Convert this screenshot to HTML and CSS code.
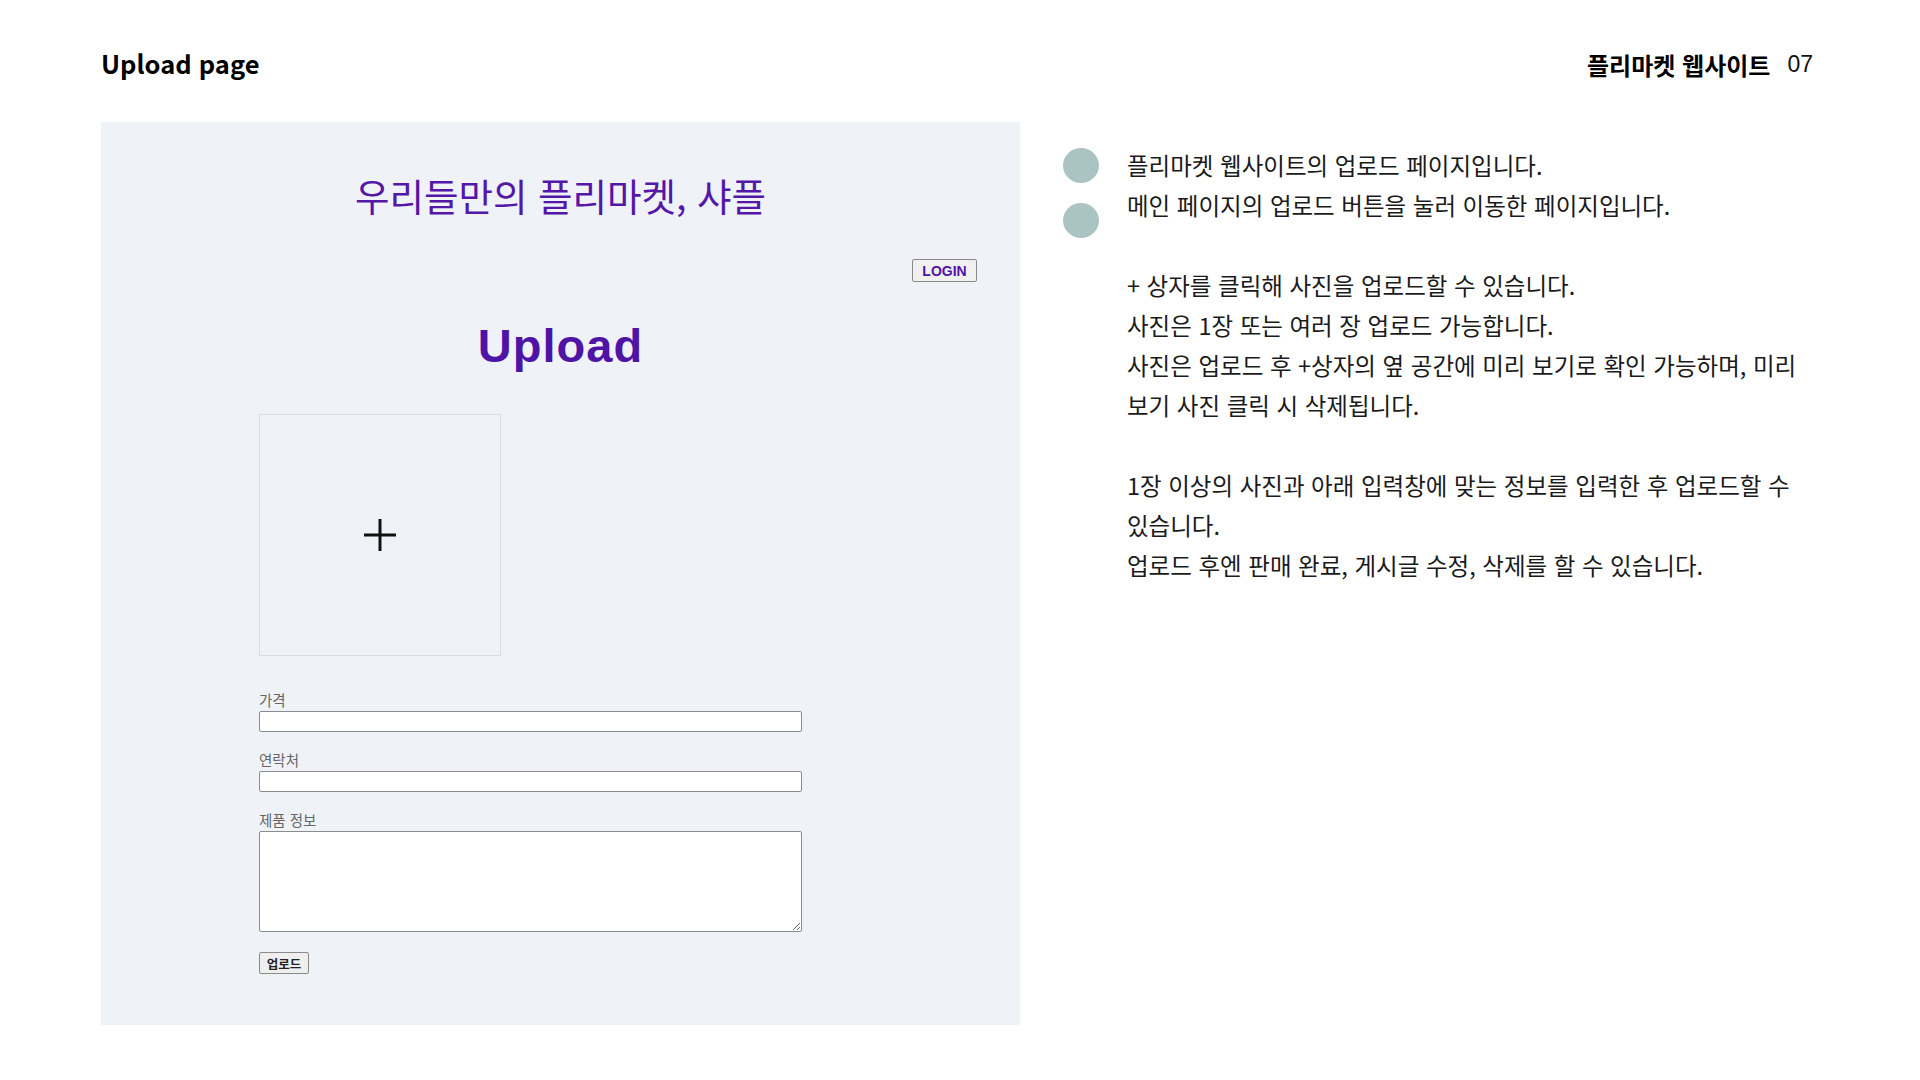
FILE: index.html
```html
<!DOCTYPE html>
<html lang="ko">
<head>
<meta charset="utf-8">
<title>Upload page</title>
<link rel="stylesheet" href="styles.css">
</head>
<body>
<div class="slide">
  <header class="slide-header">
    <h1 class="slide-title">Upload page</h1>
    <div class="slide-meta"><span class="meta-name">플리마켓 웹사이트</span><span class="meta-num">07</span></div>
  </header>
  <main class="slide-body">
    <section class="shot">
      <h2 class="site-title">우리들만의 플리마켓, 샤플</h2>
      <div class="login-row"><button class="login-btn" type="button">LOGIN</button></div>
      <h3 class="upload-title">Upload</h3>
      <form class="upload-form">
        <div class="photo-box">
          <svg width="34" height="34" viewBox="0 0 34 34"><path d="M17 1V33M1 17H33" stroke="#111" stroke-width="3" fill="none"/></svg>
        </div>
        <label class="field-label" for="price">가격</label>
        <input class="field-input" id="price" type="text">
        <label class="field-label" for="contact">연락처</label>
        <input class="field-input" id="contact" type="text">
        <label class="field-label" for="info">제품 정보</label>
        <textarea class="field-area" id="info"></textarea>
        <button class="submit-btn" type="button">업로드</button>
      </form>
    </section>
    <section class="notes">
      <div class="dots">
        <span class="dot"></span>
        <span class="dot"></span>
      </div>
      <div class="note-text">
        <p>플리마켓 웹사이트의 업로드 페이지입니다.<br>메인 페이지의 업로드 버튼을 눌러 이동한 페이지입니다.</p>
        <p>+ 상자를 클릭해 사진을 업로드할 수 있습니다.<br>사진은 1장 또는 여러 장 업로드 가능합니다.<br>사진은 업로드 후 +상자의 옆 공간에 미리 보기로 확인 가능하며, 미리 보기 사진 클릭 시 삭제됩니다.</p>
        <p>1장 이상의 사진과 아래 입력창에 맞는 정보를 입력한 후 업로드할 수 있습니다.<br>업로드 후엔 판매 완료, 게시글 수정, 삭제를 할 수 있습니다.</p>
      </div>
    </section>
  </main>
</div>
</body>
</html>
```
FILE: styles.css
```css
* { box-sizing: border-box; }
html, body { margin: 0; padding: 0; background: #fff; }
body { font-family: "Noto Sans CJK KR", "Noto Sans", sans-serif; color: #111; }
.slide { width: 1920px; height: 1080px; padding: 44px 107px 0 101px; }
.slide-header { display: flex; justify-content: space-between; align-items: center; height: 38px; }
.slide-title { margin: 0; font-size: 25.5px; line-height: 34px; font-weight: 700; color: #000; }
.slide-meta { display: flex; align-items: center; gap: 17px; padding-top: 2px; }
.meta-name { font-size: 24px; font-weight: 700; color: #000; }
.meta-num { font-family: "Liberation Sans", Arial, sans-serif; font-size: 23px; color: #111; }
.slide-body { display: flex; margin-top: 40px; }
.shot { flex: 0 0 919px; width: 919px; height: 903px; background: #eff2f7; display: flex; flex-direction: column; padding-top: 50px; }
.site-title { margin: 0; text-align: center; font-size: 37.5px; line-height: 46px; font-weight: 400; color: #5417a8; }
.login-row { display: flex; justify-content: flex-end; padding-right: 43px; margin-top: 41px; }
.login-btn { width: 65px; height: 23px; padding: 0; font-family: "Liberation Sans", Arial, sans-serif; font-size: 14px; font-weight: 700; color: #4f14a5; background: #f0f0f0; border: 1px solid #8a8a8a; border-radius: 2px; }
.upload-title { margin: 37px 0 0; text-align: center; font-family: "Liberation Sans", Arial, sans-serif; font-size: 47px; line-height: 54px; font-weight: 700; color: #4f14a5; letter-spacing: 1px; }
.upload-form { display: flex; flex-direction: column; align-items: flex-start; margin: 41px 0 0 158px; width: 543px; }
.photo-box { width: 242px; height: 242px; border: 1px solid #d9dce1; display: flex; align-items: center; justify-content: center; margin-bottom: 35px; }
.field-label { font-size: 14.5px; line-height: 18px; color: #666; margin-bottom: 2px; }
.field-input { width: 543px; height: 21px; border: 1px solid #8c8c8c; border-radius: 2px; background: #fff; margin: 0 0 19px; padding: 0 4px; font-size: 13px; }
.field-area { width: 543px; height: 101px; border: 1px solid #8c8c8c; border-radius: 2px; background: #fff; margin: 0 0 20px; padding: 2px 4px; font-size: 13px; resize: both; }
.submit-btn { width: 50px; height: 22px; padding: 0; font-size: 12.5px; font-weight: 700; color: #222; background: #efefef; border: 1px solid #8a8a8a; border-radius: 2px; font-family: "Noto Sans CJK KR", sans-serif; }
.notes { display: flex; margin-left: 43px; padding-top: 23px; flex: 1; min-width: 0; }
.dots { display: flex; flex-direction: column; gap: 20px; flex: 0 0 37px; padding-top: 3px; }
.dot { display: block; width: 36px; height: 35px; border-radius: 50%; background: #a9c4c3; }
.note-text { margin-left: 27px; width: 684px; font-size: 23.5px; line-height: 40px; color: #1a1a1a; }
.note-text p { margin: 0 0 40px; }
```
